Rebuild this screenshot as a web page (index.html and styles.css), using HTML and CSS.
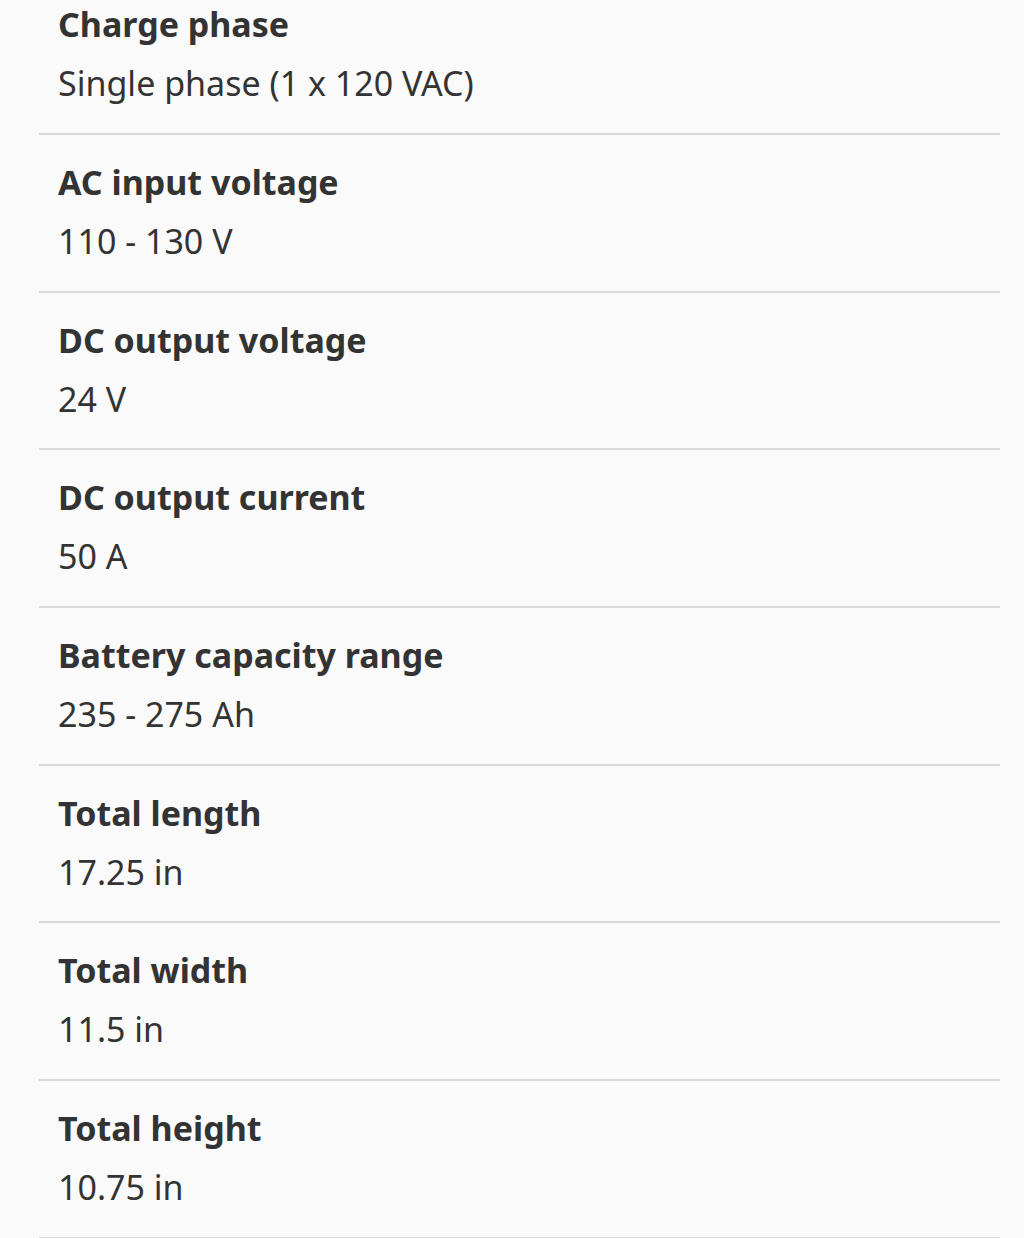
FILE: index.html
```html
<!DOCTYPE html>
<html lang="en">
<head>
<meta charset="utf-8">
<title>Specifications</title>
<link rel="stylesheet" href="styles.css">
</head>
<body>
<dl class="specs">
  <div class="row"><dt class="label">Charge phase</dt><dd class="value">Single phase (1 x 120 VAC)</dd></div>
  <div class="row"><dt class="label">AC input voltage</dt><dd class="value">110 - 130 V</dd></div>
  <div class="row"><dt class="label">DC output voltage</dt><dd class="value">24 V</dd></div>
  <div class="row"><dt class="label">DC output current</dt><dd class="value">50 A</dd></div>
  <div class="row"><dt class="label">Battery capacity range</dt><dd class="value">235 - 275 Ah</dd></div>
  <div class="row"><dt class="label">Total length</dt><dd class="value">17.25 in</dd></div>
  <div class="row"><dt class="label">Total width</dt><dd class="value">11.5 in</dd></div>
  <div class="row"><dt class="label">Total height</dt><dd class="value">10.75 in</dd></div>
</dl>
</body>
</html>
```
FILE: styles.css
```css
html, body {
  margin: 0;
  padding: 0;
  background: #fafafa;
}
body {
  font-family: "Noto Sans", "Open Sans", sans-serif;
  color: #333333;
  overflow: hidden;
}
.specs {
  margin: -22.7px 24px 0 39px;
  padding: 0;
}
.row {
  display: flex;
  flex-direction: column;
  padding: 18px 0 19.7px 19px;
  border-bottom: 2px solid #d9d9d9;
}
.label {
  font-weight: 700;
  font-size: 34px;
  line-height: 59px;
  margin: 0;
}
.value {
  font-weight: 400;
  font-size: 34px;
  line-height: 59px;
  margin: 0;
}
```
